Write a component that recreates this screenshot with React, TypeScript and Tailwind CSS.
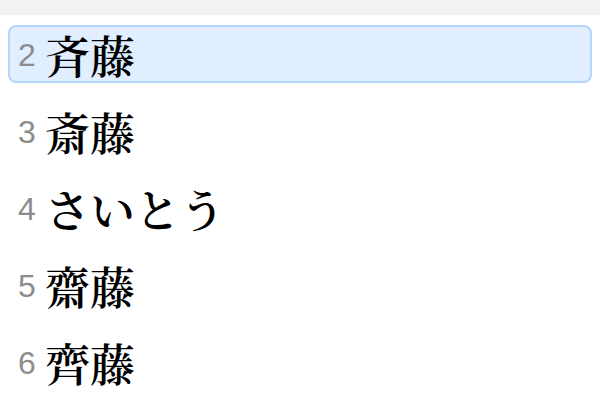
import React from "react";

const rows = [
  { n: "2", t: "斉藤", sel: true },
  { n: "3", t: "斎藤" },
  { n: "4", t: "さいとう" },
  { n: "5", t: "齋藤" },
  { n: "6", t: "齊藤" },
];

export default function App() {
  return (
    <div className="w-[600px] h-[400px] bg-white overflow-hidden">
      <div className="h-[15px] bg-[#f2f2f2]" />
      <div className="flex flex-col gap-[19px] pt-[10px] px-[8px]">
        {rows.map((r) => (
          <div
            key={r.n}
            className={
              "h-[58px] flex items-center pl-[8px] rounded-[8px] border-2 " +
              (r.sel ? "bg-[#e0eeff] border-[#b5d5fb]" : "border-transparent")
            }
          >
            <span className="text-[32px] text-[#8c8c8c] font-['Liberation_Sans',sans-serif] leading-none w-[19px] mt-[2px]">
              {r.n}
            </span>
            <span className="ml-[8px] text-[45px] text-black font-semibold font-['Noto_Serif_CJK_JP','Noto_Sans_CJK_JP',serif] leading-none">
              {r.t}
            </span>
          </div>
        ))}
      </div>
    </div>
  );
}
